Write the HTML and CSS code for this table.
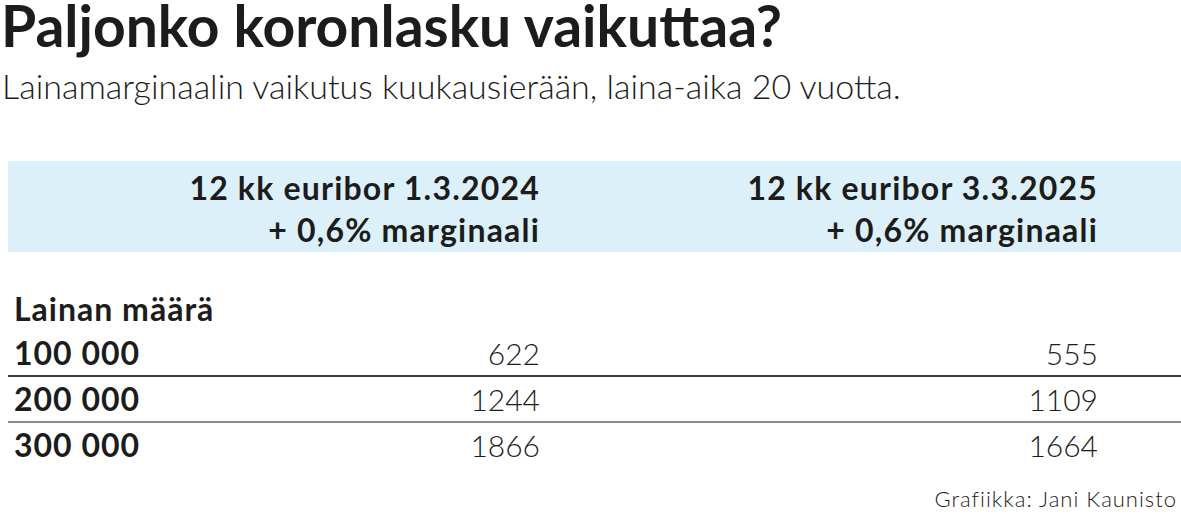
FILE: index.html
```html
<!DOCTYPE html>
<html>
<head>
  <meta charset="UTF-8">
  <title>Paljonko koronlasku vaikuttaa?</title>
  <link rel="stylesheet" href="styles.css">
</head>
<body>
  <h1 class="otsikko">Paljonko koronlasku vaikuttaa?</h1>
  <p class="ingressi">Lainamarginaalin vaikutus kuukausierään, laina-aika 20 vuotta.</p>

  <div class="taulukko">
    <div class="rivi otsake">
      <div></div>
      <div class="arvo">12 kk euribor 1.3.2024<br>+ 0,6% marginaali</div>
      <div class="arvo">12 kk euribor 3.3.2025<br>+ 0,6% marginaali</div>
    </div>

    <div class="rivi nimike">
      <div class="selite">Lainan määrä</div>
    </div>
    <div class="rivi tumma-viiva">
      <div class="selite">100 000</div>
      <div class="arvo luku">622</div>
      <div class="arvo luku">555</div>
    </div>
    <div class="rivi harmaa-viiva">
      <div class="selite">200 000</div>
      <div class="arvo luku">1244</div>
      <div class="arvo luku">1109</div>
    </div>
    <div class="rivi">
      <div class="selite">300 000</div>
      <div class="arvo luku">1866</div>
      <div class="arvo luku">1664</div>
    </div>
  </div>

  <p class="tekija">Grafiikka: Jani Kaunisto</p>
</body>
</html>
```

FILE: styles.css
```css
body {
  margin: 0;
  background-color: white;
  color: #1c1c1c;
  font-family: Lato, "Open Sans", sans-serif;
}

.otsikko {
  margin: 0;
  padding-left: 1px;
  font-size: 57px;
  line-height: 50px;
  font-weight: bold;
}

.ingressi {
  margin: 19px 0 0 0;
  padding-left: 2px;
  font-size: 34px;
  line-height: 34px;
  font-weight: 300;
}

.taulukko {
  margin: 58px 0 0 8px;
}

.rivi {
  display: grid;
  grid-template-columns: 140px 392px 558px;
  align-items: baseline;
  padding-right: 83px;
  font-size: 32px;
  line-height: 44px;
  white-space: nowrap;
}

.otsake {
  background-color: #dcf0fa;
  padding-top: 6px;
  height: 85px;
  line-height: 42px;
  font-weight: bold;
  letter-spacing: 1.2px;
}

.nimike {
  margin-top: 35px;
}

.selite {
  padding-left: 6px;
  font-weight: bold;
  letter-spacing: 1px;
}

.arvo {
  text-align: right;
}

.luku {
  font-size: 30px;
  font-weight: 300;
}

.tumma-viiva {
  border-bottom: 2px solid #3a3a3a;
}

.harmaa-viiva {
  border-bottom: 2px solid #8c8c8c;
}

.tekija {
  margin: 21px 0 0 0;
  padding-right: 4px;
  text-align: right;
  font-size: 22px;
  line-height: 22px;
  font-weight: 300;
  letter-spacing: 1px;
}
```
